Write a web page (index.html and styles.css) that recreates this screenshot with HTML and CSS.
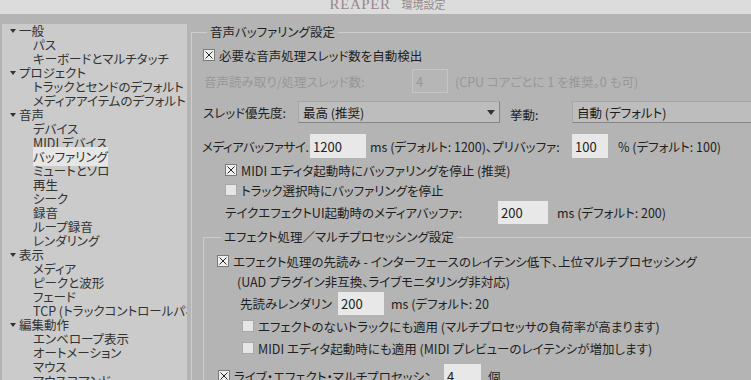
FILE: index.html
```html
<!DOCTYPE html>
<html lang="ja">
<head>
<meta charset="utf-8">
<link rel="stylesheet" href="styles.css">
</head>
<body>
<div class="titlebar"><span class="title"><span class="brand">REAPER</span> 環境設定</span></div>
<div class="main">
  <div class="tree">
    <div class="node"><span class="arrow"></span>一般</div>
    <div class="leaf">パス</div>
    <div class="leaf">キーボードとマルチタッチ</div>
    <div class="node"><span class="arrow"></span>プロジェクト</div>
    <div class="leaf">トラックとセンドのデフォルト</div>
    <div class="leaf">メディアアイテムのデフォルト</div>
    <div class="node"><span class="arrow"></span>音声</div>
    <div class="leaf">デバイス</div>
    <div class="leaf">MIDI デバイス</div>
    <div class="leaf"><span class="sel">バッファリング</span></div>
    <div class="leaf">ミュートとソロ</div>
    <div class="leaf">再生</div>
    <div class="leaf">シーク</div>
    <div class="leaf">録音</div>
    <div class="leaf">ループ録音</div>
    <div class="leaf">レンダリング</div>
    <div class="node"><span class="arrow"></span>表示</div>
    <div class="leaf">メディア</div>
    <div class="leaf">ピークと波形</div>
    <div class="leaf">フェード</div>
    <div class="leaf">TCP (トラックコントロールパネル)</div>
    <div class="node"><span class="arrow"></span>編集動作</div>
    <div class="leaf">エンベロープ表示</div>
    <div class="leaf">オートメーション</div>
    <div class="leaf">マウス</div>
    <div class="leaf">マウスコマンド</div>
  </div>
  <div class="content">
    <fieldset class="group g1">
      <legend>音声バッファリング設定</legend>
      <div class="row ra">
        <svg class="cb" viewBox="0 0 12 12"><rect x="0.5" y="0.5" width="11" height="11" fill="#efefef" stroke="#7a7a7a"/><path d="M2.5 2.5L9.5 9.5M9.5 2.5L2.5 9.5" stroke="#262626" stroke-width="1"/></svg>
        <span>必要な音声処理スレッド数を自動検出</span>
      </div>
      <div class="row rb dis">
        <span class="lbl-b">音声読み取り/処理スレッド数:</span>
        <span class="inp inp-dis">4</span>
        <span class="after-b">(CPU コアごとに 1 を推奨。0 も可)</span>
      </div>
      <div class="row rc">
        <span class="lbl-c">スレッド優先度:</span>
        <span class="drop d1">最高 (推奨)<span class="tri"></span></span>
        <span class="lbl-c2">挙動:</span>
        <span class="drop d2">自動 (デフォルト)</span>
      </div>
      <div class="row rd">
        <span class="lbl-d">メディアバッファサイ.</span>
        <span class="inp w56">1200</span>
        <span class="mid-d">ms (デフォルト: 1200)、プリバッファ:</span>
        <span class="inp w36">100</span>
        <span class="after-d">% (デフォルト: 100)</span>
      </div>
      <div class="row re ind">
        <svg class="cb" viewBox="0 0 12 12"><rect x="0.5" y="0.5" width="11" height="11" fill="#efefef" stroke="#7a7a7a"/><path d="M2.5 2.5L9.5 9.5M9.5 2.5L2.5 9.5" stroke="#262626" stroke-width="1"/></svg>
        <span>MIDI エディタ起動時にバッファリングを停止 (推奨)</span>
      </div>
      <div class="row rf ind">
        <svg class="cb" viewBox="0 0 12 12"><rect x="0.5" y="0.5" width="11" height="11" fill="#e6e6e6" stroke="#a9a9a9"/></svg>
        <span>トラック選択時にバッファリングを停止</span>
      </div>
      <div class="row rg ind">
        <span class="lbl-g">テイクエフェクトUI起動時のメディアバッファ:</span>
        <span class="inp w50">200</span>
        <span class="after-g">ms (デフォルト: 200)</span>
      </div>
      <fieldset class="group g2">
        <legend>エフェクト処理／マルチプロセッシング設定</legend>
        <div class="row rh">
          <svg class="cb" viewBox="0 0 12 12"><rect x="0.5" y="0.5" width="11" height="11" fill="#efefef" stroke="#7a7a7a"/><path d="M2.5 2.5L9.5 9.5M9.5 2.5L2.5 9.5" stroke="#262626" stroke-width="1"/></svg>
          <span>エフェクト処理の先読み - インターフェースのレイテンシ低下、上位マルチプロセッシング</span>
        </div>
        <div class="row ri">(UAD プラグイン非互換、ライブモニタリング非対応)</div>
        <div class="row rj">
          <span class="lbl-j">先読みレンダリン</span>
          <span class="inp w46">200</span>
          <span class="after-j">ms (デフォルト: 20</span>
        </div>
        <div class="row rk">
          <svg class="cb" viewBox="0 0 12 12"><rect x="0.5" y="0.5" width="11" height="11" fill="#e6e6e6" stroke="#a9a9a9"/></svg>
          <span>エフェクトのないトラックにも適用 (マルチプロセッサの負荷率が高まります)</span>
        </div>
        <div class="row rl">
          <svg class="cb" viewBox="0 0 12 12"><rect x="0.5" y="0.5" width="11" height="11" fill="#e6e6e6" stroke="#a9a9a9"/></svg>
          <span>MIDI エディタ起動時にも適用 (MIDI プレビューのレイテンシが増加します)</span>
        </div>
        <div class="row rm">
          <svg class="cb" viewBox="0 0 12 12"><rect x="0.5" y="0.5" width="11" height="11" fill="#efefef" stroke="#7a7a7a"/><path d="M2.5 2.5L9.5 9.5M9.5 2.5L2.5 9.5" stroke="#262626" stroke-width="1"/></svg>
          <span class="lbl-m">ライブ・エフェクト・マルチプロセッシング</span>
          <span class="inp w37">4</span>
          <span class="after-m">個</span>
        </div>
      </fieldset>
    </fieldset>
  </div>
</div>
</body>
</html>
```
FILE: styles.css
```css
html, body {
  margin: 0;
  padding: 0;
}
body {
  width: 751px;
  height: 380px;
  overflow: hidden;
  background: #b4b4b4;
  font-family: "Noto Sans CJK JP", "Noto Sans", sans-serif;
  font-size: 12.5px;
  color: #1f1f1f;
  font-feature-settings: "palt";
}
.titlebar {
  height: 14px;
  background: #dcdcdc;
  display: flex;
  justify-content: center;
  padding-left: 24px;
  overflow: hidden;
}
.title {
  font-family: "Liberation Serif", "Noto Sans CJK JP", serif;
  font-size: 11px;
  line-height: 14px;
  margin-top: -3px;
  color: #98888a;
  white-space: nowrap;
  font-feature-settings: normal;
}
.brand {
  font-size: 15px;
  letter-spacing: 0.6px;
  margin-right: 8px;
}
.main {
  display: flex;
  height: 366px;
}
.tree {
  margin: 10px 0 0 2px;
  width: 185px;
  flex: none;
  background: #cbcbcb;
  overflow: hidden;
  line-height: 14px;
  color: #333;
  white-space: nowrap;
}
.node {
  display: flex;
  align-items: center;
  padding-left: 8px;
}
.arrow {
  width: 0;
  height: 0;
  border-left: 3.5px solid transparent;
  border-right: 3.5px solid transparent;
  border-top: 4px solid #333;
  margin-right: 3px;
}
.leaf {
  padding-left: 31px;
}
.sel {
  background: #e6e6e6;
}
.content {
  flex: 1;
  padding: 11px 0 0 4px;
  min-width: 0;
  overflow: hidden;
}
.group {
  margin: 0;
  padding: 0 0 0 11px;
  min-width: 0;
  border: 1px solid #cdcdcd;
  border-right: none;
  border-bottom: none;
}
.group legend {
  padding: 0 3px;
  margin-left: 4px;
  line-height: 14px;
  white-space: nowrap;
}
.g1 {
  height: 400px;
}
.row {
  display: flex;
  align-items: center;
  height: 20px;
  white-space: nowrap;
}
.row > * {
  flex: none;
}
.cb {
  width: 12px;
  height: 12px;
  margin-right: 4px;
}
.inp {
  box-sizing: border-box;
  background: #e8e8e8;
  font-size: 13px;
  padding-left: 3px;
  display: flex;
  align-items: center;
  color: #222;
}
.inp-dis {
  width: 36px;
  height: 24px;
  background: #b6b6b6;
  border: 1px solid #c6c6c6;
  color: #979797;
}
.dis {
  color: #979797;
}
.ra { margin-top: 6px; }
.rb { margin-top: 4px; height: 24px; }
.lbl-b { width: 209px; padding-left: 1px; box-sizing: border-box; }
.after-b { margin-left: 7px; }
.rc { margin-top: 8px; height: 22px; }
.lbl-c { width: 95px; }
.drop {
  position: relative;
  box-sizing: border-box;
  height: 22px;
  background: #bdbdbd;
  border: 1px solid;
  border-color: #a6a6a6 #858585 #858585 #a6a6a6;
  padding-left: 4px;
  display: flex;
  align-items: center;
  color: #1a1a1a;
}
.d1 { width: 202px; }
.d2 { width: 200px; }
.tri {
  position: absolute;
  right: 4px;
  top: 8px;
  width: 0;
  height: 0;
  border-left: 4px solid transparent;
  border-right: 4px solid transparent;
  border-top: 5px solid #333;
}
.lbl-c2 { width: 62px; margin-left: 10px; padding-top: 4px; }
.rd { margin-top: 11px; height: 24px; }
.lbl-d { width: 108px; margin-left: -1px; letter-spacing: -0.4px; }
.w56 { width: 56px; height: 24px; }
.w36 { width: 36px; height: 24px; }
.w50 { width: 50px; height: 23px; }
.w46 { width: 46px; height: 23px; }
.w37 { width: 37px; height: 24px; }
.mid-d { width: 202px; margin-left: 4px; }
.after-d { margin-left: 10px; }
.ind { padding-left: 22px; }
.re { margin-top: 2px; }
.rg { margin-top: 1px; height: 23px; }
.lbl-g { width: 273px; }
.after-g { margin-left: 9px; }
.g2 {
  margin-top: 6px;
  padding-left: 13px;
  height: 300px;
}
.rh { margin-top: 7px; }
.ri { padding-left: 20px; }
.rj { margin-top: 1px; height: 23px; padding-left: 23px; }
.lbl-j { width: 98px; }
.after-j { margin-left: 7px; }
.rk { margin-top: 1px; padding-left: 25px; }
.rl { margin-top: 2px; padding-left: 25px; }
.rm { margin-top: 6px; height: 24px; padding-left: 1px; }
.lbl-m { width: 196px; margin-right: 14px; overflow: hidden; }
.after-m { margin-left: 7px; }
```
